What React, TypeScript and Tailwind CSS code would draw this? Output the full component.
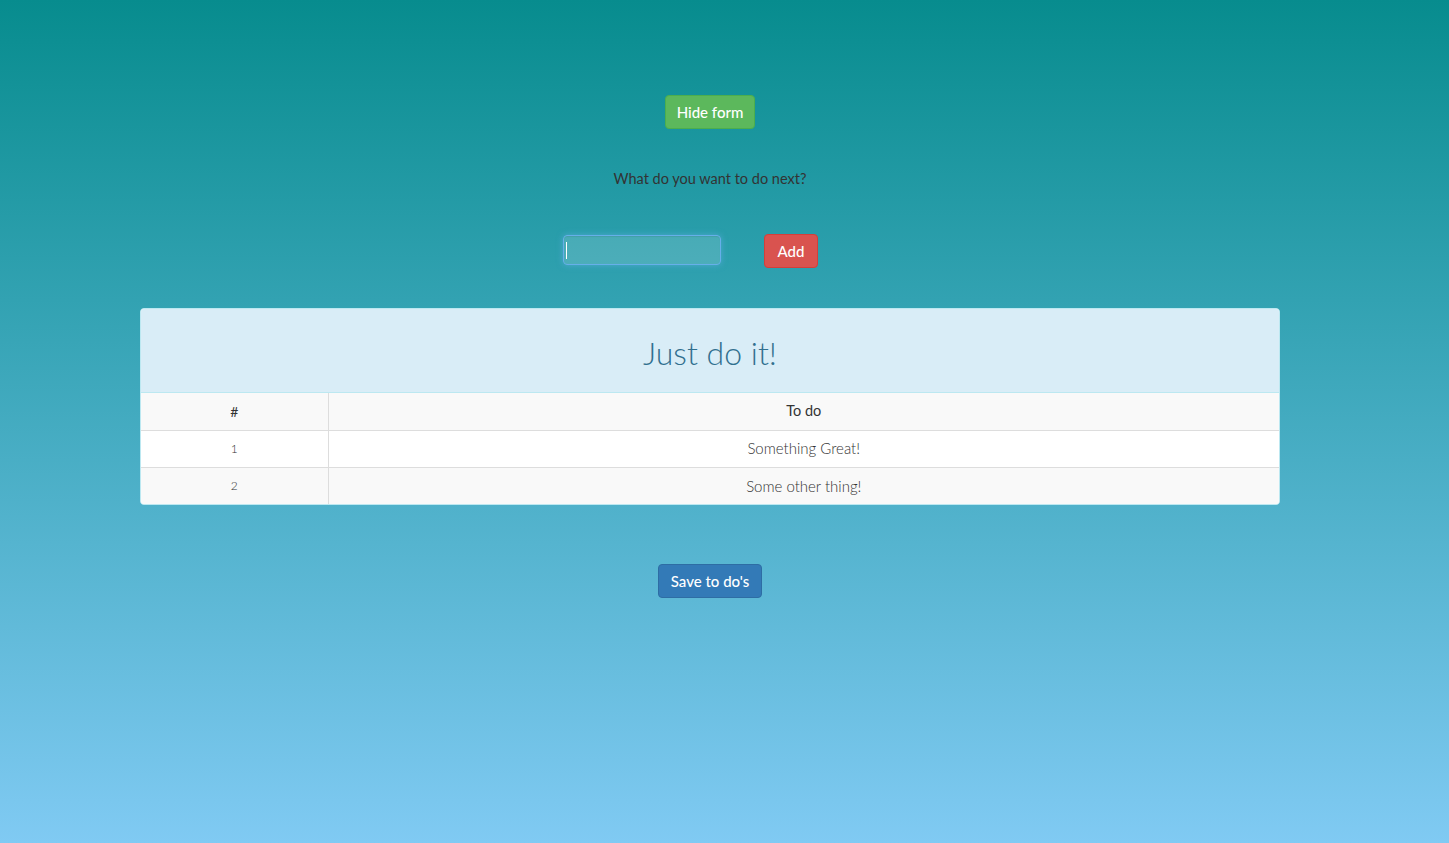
import React from 'react';

const todos = ['Something Great!', 'Some other thing!'];

const App = () => {
  return (
    <div
      className="min-h-[843px] w-full bg-[linear-gradient(to_bottom,#078c8e,#80caf3)] text-[#333] text-[14px]"
      style={{ fontFamily: 'Lato, "Open Sans", sans-serif' }}
    >
      <div className="ml-[140px] w-[1140px] pt-[95px]">
        {/* Toggle */}
        <div className="flex justify-center">
          <button className="h-[34px] w-[90px] rounded-[4px] border border-[#4cae4c] bg-[#5cb85c] text-[15px] font-medium text-white">
            Hide form
          </button>
        </div>

        {/* Form */}
        <p className="mt-[40px] text-center text-[14.5px] leading-[20px] text-[#333]">What do you want to do next?</p>
        <div className="mt-[45px] flex items-start justify-center pr-[39px]">
          <div className="relative mt-[1px] h-[30px] w-[158px] rounded-[4px] border border-[#66afe9] bg-white/15 shadow-[0_0_6px_rgba(102,175,233,0.6),inset_0_1px_1px_rgba(0,0,0,0.075)]">
            <span className="absolute left-[2px] top-[6px] h-[17px] w-px bg-white"></span>
          </div>
          <button className="ml-[43px] h-[34px] w-[54px] rounded-[4px] border border-[#d43f3a] bg-[#d9534f] text-[15px] font-medium text-white">
            Add
          </button>
        </div>

        {/* Panel */}
        <div className="mt-[40px] overflow-hidden rounded-[4px] border border-[#bce8f1] bg-white">
          <div className="flex h-[84px] items-center justify-center border-b border-[#bce8f1] bg-[#d9edf7] pt-[4px]">
            <h1 className="text-[32px] font-light text-[#31708f]">Just do it!</h1>
          </div>
          <table className="w-full border-collapse">
            <thead>
              <tr className="h-[37px] bg-[#f9f9f9]">
                <th className="w-[187px] border-r border-[#ddd] text-center text-[14px] font-normal">#</th>
                <th className="text-center text-[14.5px] font-normal">To do</th>
              </tr>
            </thead>
            <tbody>
              {todos.map((t, i) => (
                <tr key={t} className={`h-[37px] border-t border-[#ddd] ${i % 2 === 0 ? 'bg-white' : 'bg-[#f9f9f9]'}`}>
                  <td className="border-r border-[#ddd] text-center text-[12px] font-light">{i + 1}</td>
                  <td className="text-center text-[15px] font-light">{t}</td>
                </tr>
              ))}
            </tbody>
          </table>
        </div>

        {/* Save */}
        <div className="mt-[59px] flex justify-center">
          <button className="h-[34px] w-[104px] rounded-[4px] border border-[#2e6da4] bg-[#337ab7] text-[15px] font-medium text-white">
            Save to do's
          </button>
        </div>
      </div>
    </div>
  );
};

export default App;
